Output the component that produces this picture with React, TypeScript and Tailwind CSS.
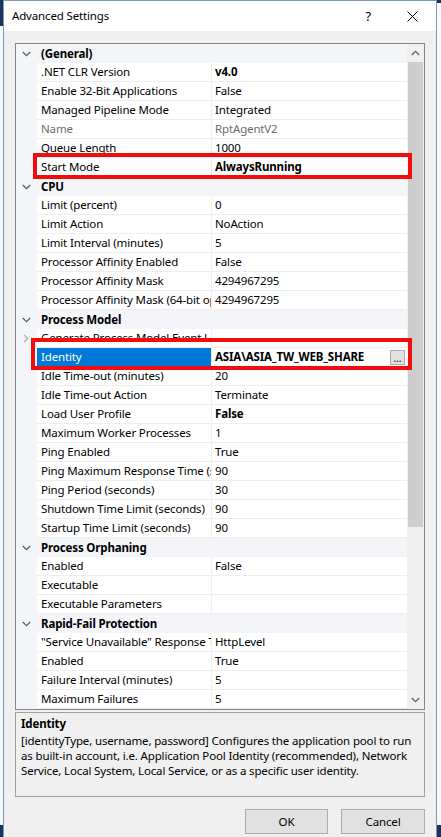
import React from "react";

type Row =
  | { kind: "cat"; label: string }
  | {
      kind: "prop";
      name: string;
      value?: string;
      bold?: boolean;
      gray?: boolean;
      expander?: boolean;
      selected?: boolean;
      button?: boolean;
    };

const rows: Row[] = [
  { kind: "cat", label: "(General)" },
  { kind: "prop", name: ".NET CLR Version", value: "v4.0", bold: true },
  { kind: "prop", name: "Enable 32-Bit Applications", value: "False" },
  { kind: "prop", name: "Managed Pipeline Mode", value: "Integrated" },
  { kind: "prop", name: "Name", value: "RptAgentV2", gray: true },
  { kind: "prop", name: "Queue Length", value: "1000" },
  { kind: "prop", name: "Start Mode", value: "AlwaysRunning", bold: true },
  { kind: "cat", label: "CPU" },
  { kind: "prop", name: "Limit (percent)", value: "0" },
  { kind: "prop", name: "Limit Action", value: "NoAction" },
  { kind: "prop", name: "Limit Interval (minutes)", value: "5" },
  { kind: "prop", name: "Processor Affinity Enabled", value: "False" },
  { kind: "prop", name: "Processor Affinity Mask", value: "4294967295" },
  { kind: "prop", name: "Processor Affinity Mask (64-bit option)", value: "4294967295" },
  { kind: "cat", label: "Process Model" },
  { kind: "prop", name: "Generate Process Model Event Log Entry", value: "", expander: true },
  { kind: "prop", name: "Identity", value: "ASIA\\ASIA_TW_WEB_SHARE", bold: true, selected: true, button: true },
  { kind: "prop", name: "Idle Time-out (minutes)", value: "20" },
  { kind: "prop", name: "Idle Time-out Action", value: "Terminate" },
  { kind: "prop", name: "Load User Profile", value: "False", bold: true },
  { kind: "prop", name: "Maximum Worker Processes", value: "1" },
  { kind: "prop", name: "Ping Enabled", value: "True" },
  { kind: "prop", name: "Ping Maximum Response Time (seconds)", value: "90" },
  { kind: "prop", name: "Ping Period (seconds)", value: "30" },
  { kind: "prop", name: "Shutdown Time Limit (seconds)", value: "90" },
  { kind: "prop", name: "Startup Time Limit (seconds)", value: "90" },
  { kind: "cat", label: "Process Orphaning" },
  { kind: "prop", name: "Enabled", value: "False" },
  { kind: "prop", name: "Executable", value: "" },
  { kind: "prop", name: "Executable Parameters", value: "" },
  { kind: "cat", label: "Rapid-Fail Protection" },
  { kind: "prop", name: "\"Service Unavailable\" Response Type", value: "HttpLevel" },
  { kind: "prop", name: "Enabled", value: "True" },
  { kind: "prop", name: "Failure Interval (minutes)", value: "5" },
  { kind: "prop", name: "Maximum Failures", value: "5" },
];

function ChevronDown({ color = "#5a5a5a" }: { color?: string }) {
  return (
    <svg width="9" height="6" viewBox="0 0 9 6">
      <path d="M0.8 1 L4.5 4.6 L8.2 1" fill="none" stroke={color} strokeWidth="1.3" />
    </svg>
  );
}
function ChevronUp({ color = "#5a5a5a" }: { color?: string }) {
  return (
    <svg width="9" height="6" viewBox="0 0 9 6">
      <path d="M0.8 5 L4.5 1.4 L8.2 5" fill="none" stroke={color} strokeWidth="1.3" />
    </svg>
  );
}
function ChevronRight() {
  return (
    <svg width="6" height="9" viewBox="0 0 6 9">
      <path d="M1 0.8 L4.6 4.5 L1 8.2" fill="none" stroke="#a8a8a8" strokeWidth="1.2" />
    </svg>
  );
}

function GridRow({ row }: { row: Row }) {
  if (row.kind === "cat") {
    return (
      <div className="flex h-[19px] bg-[#f3f5f9]">
        <div className="w-[21px] h-full flex items-center pl-[6px]">
          <ChevronDown />
        </div>
        <div className="flex-1 pl-[4px] leading-[19px] font-bold text-black whitespace-nowrap overflow-hidden">
          {row.label}
        </div>
      </div>
    );
  }
  return (
    <div className="flex h-[19px] bg-[#eeeeee] gap-[1px]">
      <div className="w-[21px] h-full bg-[#f3f5f9] flex items-center pl-[7px] -mr-[1px]">
        {row.expander ? <ChevronRight /> : null}
      </div>
      <div
        className={
          "w-[174px] h-[18px] pl-[4px] leading-[18px] whitespace-nowrap overflow-hidden " +
          (row.selected ? "bg-[#0078d7] text-white" : "bg-white") +
          (row.gray ? " text-[#6d6d6d]" : row.selected ? "" : " text-black")
        }
      >
        {row.name}
      </div>
      <div
        className={
          "w-[195px] h-[18px] bg-white pl-[3px] leading-[18px] whitespace-nowrap overflow-hidden flex items-start " +
          (row.gray ? "text-[#6d6d6d]" : "text-black") +
          (row.bold ? " font-bold" : "")
        }
      >
        <span className="flex-1">{row.value}</span>
        {row.button ? (
          <span className="mt-[2px] mr-[2px] w-[15px] h-[15px] bg-[#e1e1e1] border border-[#adadad] flex items-end justify-center text-[10px] leading-[11px] font-normal tracking-normal">
            ...
          </span>
        ) : null}
      </div>
    </div>
  );
}

export default function App() {
  return (
    <div className="relative w-[441px] h-[837px] overflow-hidden flex bg-white font-['Noto_Sans',sans-serif] text-[11.5px] tracking-[-0.15px] text-black">
      {/* left background strip */}
      <div className="w-[3px] h-full flex flex-col">
        <div className="h-[26px] bg-[#1a3556]" />
        <div className="flex-1 bg-[#f7f9fb]" />
        <div className="h-[12px] bg-[#1a3556]" />
      </div>

      {/* dialog */}
      <div className="w-[434px] h-full flex flex-col border-x border-[#7c98c0]">
        {/* title bar */}
        <div className="h-[31px] bg-white flex items-center pl-[8px] pr-[18px] border-t border-[#7c98c0]">
          <span className="text-[11.5px] text-black">Advanced Settings</span>
          <span className="ml-auto mr-[36px] text-[13px] text-black leading-none">?</span>
          <svg width="11" height="11" viewBox="0 0 11 11">
            <path d="M0.5 0.5 L10.5 10.5 M10.5 0.5 L0.5 10.5" stroke="#000" strokeWidth="1" />
          </svg>
        </div>

        {/* body */}
        <div className="flex-1 bg-[#f0f0f0] px-[11px] pt-[12px] flex flex-col">
          {/* property grid */}
          <div className="h-[667px] border border-[#828790] flex bg-white">
            <div className="w-[391px] flex flex-col">
              {rows.map((r, i) => (
                <GridRow key={i} row={r} />
              ))}
            </div>
            <div className="w-[17px] bg-[#f0f0f0] flex flex-col">
              <div className="h-[18px] flex items-center justify-center">
                <ChevronUp color="#606060" />
              </div>
              <div className="h-[465px] mx-[1px] bg-[#cdcdcd]" />
              <div className="flex-1" />
              <div className="h-[18px] flex items-center justify-center">
                <ChevronDown color="#606060" />
              </div>
            </div>
          </div>

          {/* description */}
          <div className="mt-[2px] h-[85px] border border-[#a0a0a0] px-[5px] pt-[3px]">
            <div className="font-bold leading-[15px]">Identity</div>
            <div className="mt-[2px] leading-[15px]">
              [identityType, username, password] Configures the application pool to run as built-in account, i.e. Application Pool Identity (recommended), Network Service, Local System, Local Service, or as a specific user identity.
            </div>
          </div>

          {/* buttons */}
          <div className="mt-[12px] flex justify-end gap-[13px]">
            <div className="w-[83px] h-[25px] bg-[#e1e1e1] border border-[#adadad] flex items-center justify-center">
              OK
            </div>
            <div className="w-[84px] h-[25px] bg-[#e1e1e1] border border-[#adadad] flex items-center justify-center">
              Cancel
            </div>
          </div>
        </div>
      </div>

      {/* right background strip */}
      <div className="w-[4px] h-full flex flex-col">
        <div className="h-[3px] bg-[#1a3556]" />
        <div className="flex-1 bg-[#f7f9fb]" />
        <div className="h-[12px] bg-[#1a3556]" />
      </div>

      {/* red highlight boxes */}
      <div className="absolute left-[33px] top-[153px] w-[379px] h-[26px] border-[4px] border-[#f20d0d]" />
      <div className="absolute left-[31px] top-[338px] w-[381px] h-[32px] border-[4px] border-[#f20d0d]" />
    </div>
  );
}
